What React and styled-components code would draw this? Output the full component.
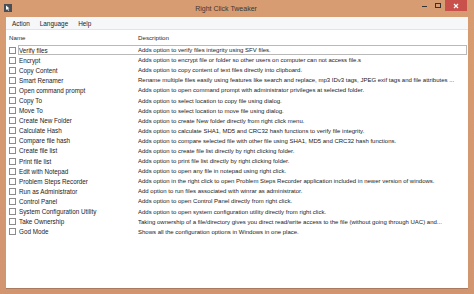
import React from 'react';
import styled, { createGlobalStyle } from 'styled-components';

const GlobalStyle = createGlobalStyle`
  html, body {
    margin: 0;
    padding: 0;
    background: #d49a70;
  }
  * { box-sizing: border-box; }
`;

const features = [
  ['Verify files', 'Adds option to verify files integrity using SFV files.'],
  ['Encrypt', 'Adds option to encrypt file or folder so other users on computer can not access file.s'],
  ['Copy Content', 'Adds option to copy content of text files directly into clipboard.'],
  ['Smart Renamer', 'Rename multiple files easily using features like search and replace, mp3 IDv3 tags, JPEG exif tags and file attributes ...'],
  ['Open command prompt', 'Adds option to open command prompt with administrator privileges at selected folder.'],
  ['Copy To', 'Adds option to select location to copy file using dialog.'],
  ['Move To', 'Adds option to select location to move file using dialog.'],
  ['Create New Folder', 'Adds option to create New folder directly from right click menu.'],
  ['Calculate Hash', 'Adds option to calculate SHA1, MD5 and CRC32 hash functions to verify file integrity.'],
  ['Compare file hash', 'Adds option to compare selected file with other file using SHA1, MD5 and CRC32 hash functions.'],
  ['Create file list', 'Adds option to create file list directly by right clicking folder.'],
  ['Print file list', 'Adds option to print file list directly by right clicking folder.'],
  ['Edit with Notepad', 'Adds option to open any file in notepad using right click.'],
  ['Problem Steps Recorder', 'Adds option in the right click to open Problem Steps Recorder application included in newer version of windows.'],
  ['Run as Administrator', 'Add option to run files associated with winrar as administrator.'],
  ['Control Panel', 'Adds option to open Control Panel directly from right click.'],
  ['System Configuration Utility', 'Adds option to open system configuration utility directly from right click.'],
  ['Take Ownership', 'Taking ownership of a file/directory gives you direct read/write access to the file (without going through UAC) and...'],
  ['God Mode', 'Shows all the configuration options in Windows in one place.'],
];

const App = () => {
  return (
    <Window>
      <GlobalStyle />
      <TitleBar>
        <AppIcon>
          <svg width="8" height="8" viewBox="0 0 8 8">
            <rect width="8" height="8" fill="#4a4f57" />
            <path d="M2 1.5 L2 6 L3.2 4.9 L4.2 6.8 L5 6.4 L4 4.6 L5.6 4.5 Z" fill="#fff" />
          </svg>
        </AppIcon>
        <Title>Right Click Tweaker</Title>
        <Controls>
          <CtrlButton>
            <MinGlyph />
          </CtrlButton>
          <CtrlButton>
            <MaxGlyph />
          </CtrlButton>
          <CloseButton>
            <svg width="6" height="6" viewBox="0 0 6 6">
              <path d="M1 1 L5 5 M5 1 L1 5" stroke="#fff" strokeWidth="1.2" />
            </svg>
          </CloseButton>
        </Controls>
      </TitleBar>
      <Client>
        <MenuBar>
          <MenuItem>Action</MenuItem>
          <MenuItem>Language</MenuItem>
          <MenuItem>Help</MenuItem>
        </MenuBar>
        <HeaderRow>
          <HeaderCell>Name</HeaderCell>
          <HeaderCell>Description</HeaderCell>
        </HeaderRow>
        <List>
          {features.map(([name, desc], i) => (
            <Row key={name}>
              <NameCell>
                <Check />
                <NameText>{name}</NameText>
              </NameCell>
              <DescCell>{desc}</DescCell>
              {i === 0 && <FocusRect />}
            </Row>
          ))}
        </List>
      </Client>
    </Window>
  );
};

export default App;

const Window = styled.div`
  width: 474px;
  height: 294px;
  background: linear-gradient(#d79c71, #d19670);
  display: flex;
  flex-direction: column;
  padding: 0 6px 5px 6px;
  font-family: "Liberation Sans", Arial, sans-serif;
`;

const TitleBar = styled.div`
  height: 17px;
  display: flex;
  align-items: center;
  margin: 0 -6px;
  padding-left: 4px;
`;

const AppIcon = styled.div`
  width: 8px;
  height: 8px;
  display: flex;
  margin-top: -2px;
`;

const Title = styled.div`
  flex: 1;
  text-align: center;
  font-size: 7px;
  color: #3a3a3a;
  margin-top: -1px;
  padding-left: 22px;
`;

const Controls = styled.div`
  display: flex;
  align-self: flex-start;
  height: 11px;
  margin-right: 7px;
`;

const CtrlButton = styled.div`
  width: 13px;
  height: 11px;
  display: flex;
  align-items: center;
  justify-content: center;
`;

const MinGlyph = styled.div`
  width: 5px;
  height: 1.5px;
  background: #333;
  margin-top: 2px;
`;

const MaxGlyph = styled.div`
  width: 6px;
  height: 5px;
  border: 1px solid #333;
  border-top-width: 1.5px;
`;

const CloseButton = styled.div`
  width: 22px;
  height: 11px;
  background: #c9514c;
  display: flex;
  align-items: center;
  justify-content: center;
  margin-left: 1px;
`;

const Client = styled.div`
  flex: 1;
  background: #fff;
  display: flex;
  flex-direction: column;
  border-bottom: 1px solid #a97a60;
`;

const MenuBar = styled.div`
  height: 13px;
  display: flex;
  align-items: center;
  gap: 10px;
  padding-left: 6px;
  background: #f6f7f9;
  border-bottom: 1px solid #e3e4e6;
`;

const MenuItem = styled.span`
  font-size: 6.4px;
  color: #1e1e1e;
`;

const HeaderRow = styled.div`
  height: 14px;
  display: grid;
  grid-template-columns: 132px 1fr;
  align-items: center;
`;

const HeaderCell = styled.div`
  font-size: 6.2px;
  color: #2a2a2a;
  padding-left: 3px;
  &:last-child { padding-left: 0; }
`;

const List = styled.div`
  display: flex;
  flex-direction: column;
  padding-top: 1px;
`;

const Row = styled.div`
  height: 10.1px;
  display: grid;
  grid-template-columns: 132px 1fr;
  align-items: center;
  position: relative;
`;

const NameCell = styled.div`
  display: flex;
  align-items: center;
  gap: 3px;
  padding-left: 3px;
`;

const Check = styled.div`
  width: 7px;
  height: 7px;
  border: 1px solid #8b8b8b;
  background: #fff;
  flex-shrink: 0;
`;

const NameText = styled.span`
  font-size: 6.3px;
  color: #222;
  white-space: nowrap;
`;

const DescCell = styled.div`
  font-size: 6px;
  color: #222;
  white-space: nowrap;
  overflow: hidden;
`;

const FocusRect = styled.div`
  position: absolute;
  left: 12px;
  right: 1px;
  top: 0;
  bottom: 0;
  border: 1px solid #b9b9b9;
  pointer-events: none;
`;
